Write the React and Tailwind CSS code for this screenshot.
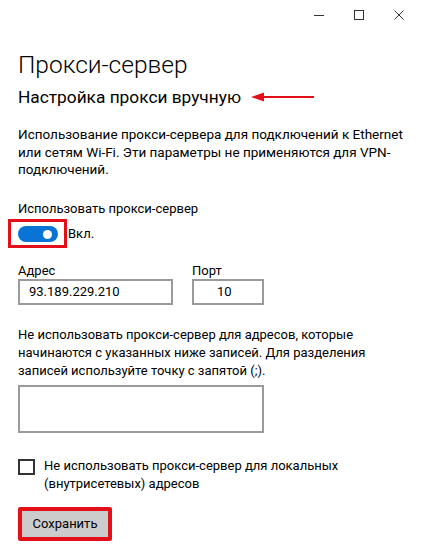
import React from "react";

export default function App() {
  return (
    <div className="w-[422px] h-[551px] bg-white overflow-hidden font-['Roboto',sans-serif] text-black">
      {/* window controls */}
      <div className="flex justify-end h-[30px] pr-[3px] items-center text-[#333]">
        <div className="w-[40px] h-[30px] flex items-center justify-center">
          <svg width="10" height="10" viewBox="0 0 10 10"><path d="M0 5.5h10" stroke="#333" strokeWidth="1" /></svg>
        </div>
        <div className="w-[40px] h-[30px] flex items-center justify-center">
          <svg width="10" height="10" viewBox="0 0 10 10"><rect x="0.5" y="0.5" width="9" height="9" fill="none" stroke="#333" strokeWidth="1" /></svg>
        </div>
        <div className="w-[40px] h-[30px] flex items-center justify-center">
          <svg width="10" height="10" viewBox="0 0 10 10"><path d="M0.5 0.5l9 9M9.5 0.5l-9 9" stroke="#333" strokeWidth="1" /></svg>
        </div>
      </div>

      <div className="px-[18px]">
        <h1 className="mt-[19px] text-[24.5px] leading-[32px] font-light">Прокси-сервер</h1>
        <div className="mt-[5px] flex items-center h-[22px]">
          <h2 className="text-[17.3px] leading-[22px]">Настройка прокси вручную</h2>
          <svg className="ml-[10px]" width="64" height="12" viewBox="0 0 64 12">
            <path d="M0 6L13 1.5V10.5Z" fill="#e3101a" />
            <path d="M11 6H63" stroke="#e3101a" strokeWidth="2.2" />
          </svg>
        </div>

        <p className="mt-[18px] text-[13.5px] leading-[17.5px] whitespace-nowrap">
          Использование прокси-сервера для подключений к Ethernet
          <br />
          или сетям Wi-Fi. Эти параметры не применяются для VPN-
          <br />
          подключений.
        </p>

        <div className="mt-[20px] text-[13px] leading-[20px]">Использовать прокси-сервер</div>

        <div className="flex items-center h-[29px] mt-[1px]">
          <div className="relative w-[40px] h-[16px]">
            <div className="absolute left-[-10px] top-[-7px] w-[59px] h-[29px] border-[3px] border-[#e3101a]" />
            <div className="w-[40px] h-[16px] rounded-full bg-[#0a74d6] flex items-center justify-end pr-[6px]">
              <div className="w-[9px] h-[9px] rounded-full bg-white" />
            </div>
          </div>
          <span className="ml-[10px] text-[13px] leading-[20px]">Вкл.</span>
        </div>

        <div className="flex gap-[19px] mt-[14px]">
          <div className="flex flex-col">
            <span className="text-[13px] leading-[16px]">Адрес</span>
            <div className="w-[155px] h-[26px] border-2 border-[#9a9a9a] pl-[9px] flex items-center text-[13px]">93.189.229.210</div>
          </div>
          <div className="flex flex-col">
            <span className="text-[13px] leading-[16px]">Порт</span>
            <div className="w-[72px] h-[26px] border-2 border-[#9a9a9a] pl-[23px] flex items-center text-[13px]">10</div>
          </div>
        </div>

        <p className="mt-[21px] text-[13px] leading-[18px] whitespace-nowrap">
          Не использовать прокси-сервер для адресов, которые
          <br />
          начинаются с указанных ниже записей. Для разделения
          <br />
          записей используйте точку с запятой (;).
        </p>

        <div className="mt-[5px] w-[246px] h-[48px] border-2 border-[#9a9a9a]" />

        <div className="mt-[24px] flex items-start gap-[9px]">
          <div className="mt-[2px] w-[17px] h-[16px] border-2 border-[#333] shrink-0" />
          <span className="text-[13px] leading-[18px]">
            Не использовать прокси-сервер для локальных
            <br />
            (внутрисетевых) адресов
          </span>
        </div>

        <div className="mt-[14px] w-[94px] h-[34px] border-[4px] border-[#e3101a] rounded-[2px] bg-[#cccccc] flex items-center justify-center text-[13px]">
          Сохранить
        </div>
      </div>
    </div>
  );
}
